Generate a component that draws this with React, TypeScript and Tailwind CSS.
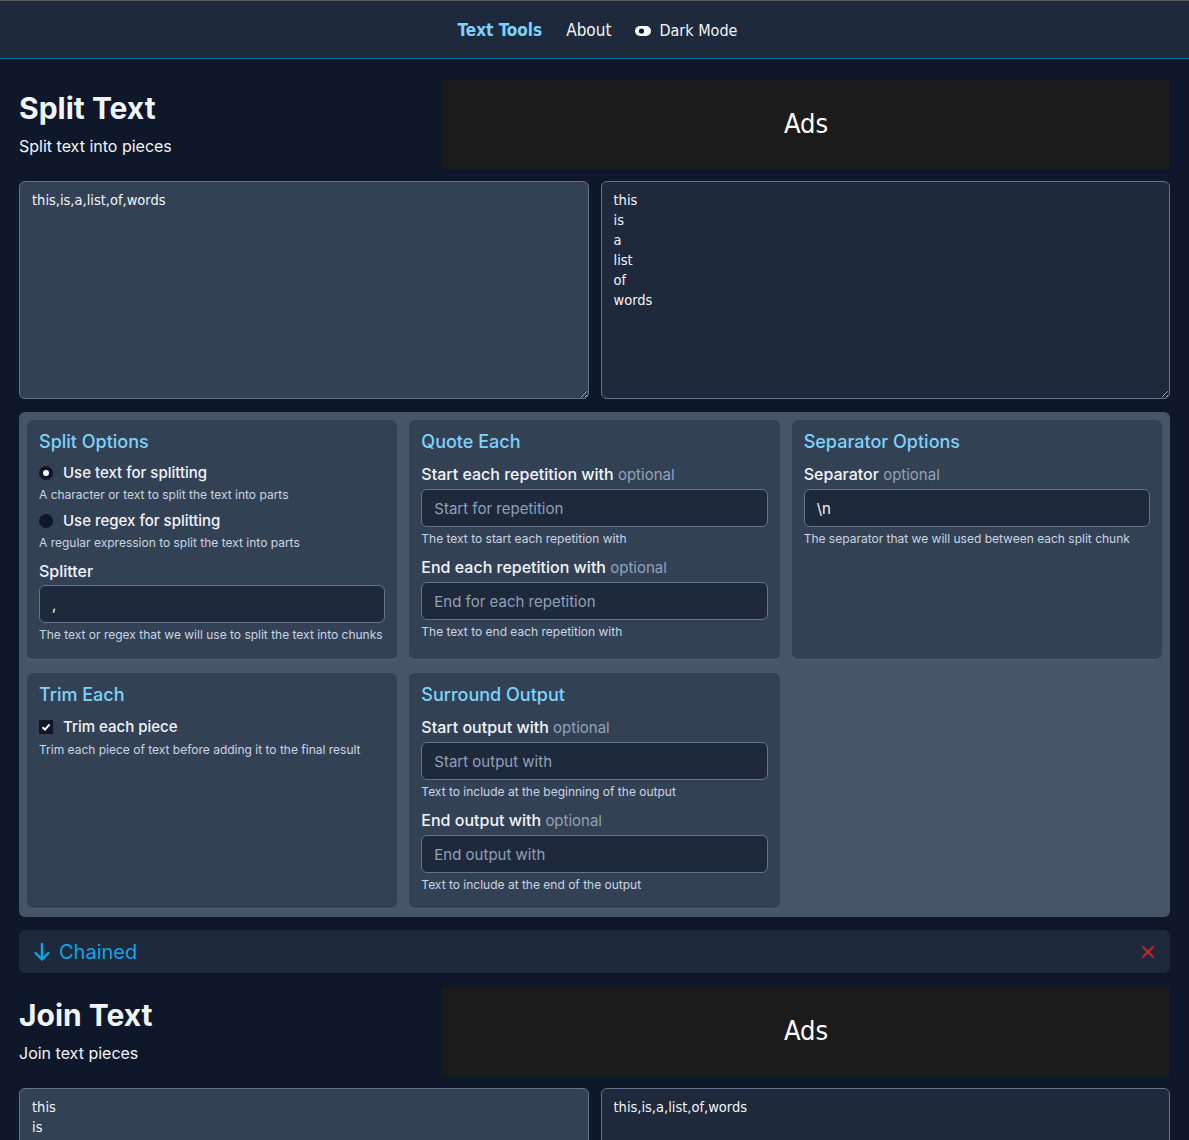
import React from "react";

const condensed = {
  fontFamily: '"Liberation Sans Narrow", "DejaVu Sans Condensed", "Liberation Sans", sans-serif',
};

const Nav = () => (
  <nav className="flex h-[59px] items-center justify-center gap-6 border-t border-b border-t-[#5b5b5b] border-b-[#0369a1] bg-[#1e293b] pt-[3px] pl-[6px] text-[17px]" style={condensed}>
    <a className="font-bold text-[#7dd3fc]">Text Tools</a>
    <a className="text-gray-100">About</a>
    <div className="flex items-center gap-2 text-gray-100">
      <svg width="16" height="10" viewBox="0 0 16 10">
        <rect x="0" y="0" width="16" height="10" rx="5" fill="#fff" />
        <circle cx="6.5" cy="5" r="2.6" fill="#0f172a" />
      </svg>
      <span className="text-[16px]">Dark Mode</span>
    </div>
  </nav>
);

const Header = ({ title, subtitle }: { title: string; subtitle: string }) => (
  <div className="flex items-start justify-between">
    <div className="pt-[9px]">
      <h1 className="text-[30px] leading-9 font-bold text-slate-100">{title}</h1>
      <p className="mt-2 text-base text-slate-100">{subtitle}</p>
    </div>
    <div className="mt-[-1px] flex h-[89px] w-[728px] items-center justify-center bg-[#1b1b1b] text-[27px] text-white" style={condensed}>
      Ads
    </div>
  </div>
);

const TextAreas = ({ input, output }: { input: string; output: string }) => (
  <div className="mt-3 grid grid-cols-2 gap-3">
    <textarea
      className="h-[218px] resize-y rounded-md border border-slate-500 bg-[#334155] px-3 py-2 text-[14.5px] leading-5 text-slate-100 outline-none"
      style={condensed}
      defaultValue={input}
    />
    <textarea
      className="h-[218px] resize-y rounded-md border border-slate-500 bg-[#1e293b] px-3 py-2 text-[14.5px] leading-5 text-slate-100 outline-none"
      style={condensed}
      defaultValue={output}
    />
  </div>
);

const Card = ({ title, children }: { title: string; children?: React.ReactNode }) => (
  <div className="rounded-md border-b border-slate-500/60 bg-[#334155] px-3 pt-2 pb-3">
    <h3 className="text-lg leading-7 font-medium text-[#7dd3fc]">{title}</h3>
    {children}
  </div>
);

const Field = ({
  label,
  placeholder,
  value,
  help,
}: {
  label: string;
  placeholder?: string;
  value?: string;
  help: string;
}) => (
  <div className="mt-[6px]">
    <div className="text-base leading-6 font-medium text-slate-100">
      {label} <span className="text-[15px] font-normal text-slate-400">optional</span>
    </div>
    <input
      className="mt-[2px] h-[38px] w-full rounded-md border border-slate-500 bg-[#1e293b] px-3 text-[15px] text-slate-100 placeholder-slate-400 outline-none"
      placeholder={placeholder}
      defaultValue={value}
    />
    <p className="mt-[2px] text-xs leading-5 text-slate-300">{help}</p>
  </div>
);

const Options = () => (
  <div className="mt-[13px] grid grid-cols-3 grid-rows-[240px_236px] gap-x-3 gap-y-[13px] rounded-md bg-[#475569] p-2">
    <Card title="Split Options">
      <label className="mt-[5px] flex items-center gap-[10px] text-[15px] leading-6 font-medium text-slate-100">
        <span className="flex h-[14px] w-[14px] items-center justify-center rounded-full bg-[#0f172a]">
          <span className="h-[6px] w-[6px] rounded-full bg-white" />
        </span>
        Use text for splitting
      </label>
      <p className="text-xs leading-5 text-slate-300">A character or text to split the text into parts</p>
      <label className="mt-[4px] flex items-center gap-[10px] text-[15px] leading-6 font-medium text-slate-100">
        <span className="h-[14px] w-[14px] rounded-full bg-[#0f172a]" />
        Use regex for splitting
      </label>
      <p className="text-xs leading-5 text-slate-300">A regular expression to split the text into parts</p>
      <div className="mt-[6px] text-base leading-6 font-medium text-slate-100">Splitter</div>
      <input
        className="mt-[2px] h-[38px] w-full rounded-md border border-slate-500 bg-[#1e293b] px-3 text-[15px] text-slate-100 outline-none"
        defaultValue=","
      />
      <p className="mt-[2px] text-xs leading-5 text-slate-300">
        The text or regex that we will use to split the text into chunks
      </p>
    </Card>
    <Card title="Quote Each">
      <Field label="Start each repetition with" placeholder="Start for repetition" help="The text to start each repetition with" />
      <Field label="End each repetition with" placeholder="End for each repetition" help="The text to end each repetition with" />
    </Card>
    <Card title="Separator Options">
      <Field label="Separator" value="\n" help="The separator that we will used between each split chunk" />
    </Card>
    <Card title="Trim Each">
      <label className="mt-[6px] flex items-center gap-[10px] text-[15px] leading-6 font-medium text-slate-100">
        <span className="flex h-[14px] w-[14px] items-center justify-center bg-[#0f172a]">
          <svg width="10" height="10" viewBox="0 0 10 10">
            <path d="M1.5 5.2 L4 7.6 L8.6 2.4" stroke="#fff" strokeWidth="2" fill="none" />
          </svg>
        </span>
        Trim each piece
      </label>
      <p className="mt-[1px] text-xs leading-5 text-slate-300">Trim each piece of text before adding it to the final result</p>
    </Card>
    <Card title="Surround Output">
      <Field label="Start output with" placeholder="Start output with" help="Text to include at the beginning of the output" />
      <Field label="End output with" placeholder="End output with" help="Text to include at the end of the output" />
    </Card>
  </div>
);

const Chained = () => (
  <div className="mt-[13px] flex h-[43px] items-center justify-between rounded-md bg-[#1e293b] pr-[15px] pl-[14px]">
    <div className="flex items-center gap-2 text-xl text-[#0ea5e9]">
      <svg width="18" height="20" viewBox="0 0 18 20" fill="none" stroke="currentColor" strokeWidth="2.4" strokeLinecap="round" strokeLinejoin="round">
        <path d="M9 2v15" />
        <path d="M2.5 11l6.5 6.5 6.5-6.5" />
      </svg>
      Chained
    </div>
    <svg width="14" height="14" viewBox="0 0 14 14">
      <path d="M1.5 1.5 L12.5 12.5 M12.5 1.5 L1.5 12.5" stroke="#c0262d" strokeWidth="2.2" />
    </svg>
  </div>
);

export default function App() {
  return (
    <div className="min-h-screen bg-[#0f172a]" style={{ fontFamily: 'Inter, "Noto Sans", sans-serif' }}>
      <Nav />
      <main className="px-[19px] pt-[22px] pb-10">
        <Header title="Split Text" subtitle="Split text into pieces" />
        <TextAreas input="this,is,a,list,of,words" output={"this\nis\na\nlist\nof\nwords"} />
        <Options />
        <Chained />
        <div className="mt-[15px]">
          <Header title="Join Text" subtitle="Join text pieces" />
          <TextAreas input={"this\nis\na\nlist\nof\nwords"} output="this,is,a,list,of,words" />
        </div>
      </main>
    </div>
  );
}
